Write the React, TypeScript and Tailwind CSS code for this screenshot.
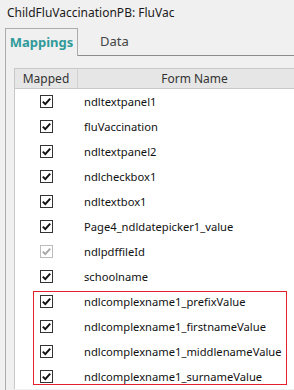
import React from 'react';

interface FieldRow {
  name: string;
  disabled?: boolean;
}

const fields: FieldRow[] = [
  { name: 'ndltextpanel1' },
  { name: 'fluVaccination' },
  { name: 'ndltextpanel2' },
  { name: 'ndlcheckbox1' },
  { name: 'ndltextbox1' },
  { name: 'Page4_ndldatepicker1_value' },
  { name: 'ndlpdffileId', disabled: true },
  { name: 'schoolname' },
];

const highlighted: FieldRow[] = [
  { name: 'ndlcomplexname1_prefixValue' },
  { name: 'ndlcomplexname1_firstnameValue' },
  { name: 'ndlcomplexname1_middlenameValue' },
  { name: 'ndlcomplexname1_surnameValue' },
];

const Check = ({ disabled }: { disabled?: boolean }) => (
  <div
    className={`w-[13px] h-[13px] border bg-white flex items-center justify-center ${
      disabled ? 'border-[#bcbcbc]' : 'border-[#333333]'
    }`}
  >
    <svg width="11" height="11" viewBox="0 0 11 11">
      <path
        d="M1.8 5.6 L4.3 8.1 L9.2 2.6"
        fill="none"
        stroke={disabled ? '#a8a8a8' : '#111111'}
        strokeWidth="2"
      />
    </svg>
  </div>
);

const Row = ({ row }: { row: FieldRow }) => (
  <div className="flex h-[25px] items-center">
    <div className="w-[63px] flex justify-center shrink-0">
      <Check disabled={row.disabled} />
    </div>
    <div className="pl-[6px] text-[11.2px] text-[#111111] whitespace-nowrap">{row.name}</div>
  </div>
);

export default function App() {
  return (
    <div className="w-[294px] h-[390px] overflow-hidden bg-[#f0f0f0] text-[12px] font-['Noto_Sans',sans-serif] leading-none">
      <div className="h-[28px] pl-[7px] pt-[7px] text-[#1a1a1a]">ChildFluVaccinationPB: FluVac</div>

      <div className="flex h-[28px] pl-[5px]">
        <div className="w-[73px] border border-b-0 border-[#acacac] flex items-center justify-center font-bold text-[13px] text-[#2f9a9a]">
          Mappings
        </div>
        <div className="flex-1 border-b border-[#8c8c8c] flex items-center pl-[22px] text-[13px] text-[#444444]">
          Data
        </div>
      </div>

      <div className="ml-[5px] border-l border-[#acacac] pl-[8px] pt-[12px] h-full">
        <div className="w-[300px] border-l border-t border-[#c8c8c8] bg-white">
          <div className="flex h-[20px] bg-[#e6e6e6] border-b border-[#c8c8c8] text-[#333333]">
            <div className="w-[63px] border-r border-[#d2d2d2] flex items-center justify-center">Mapped</div>
            <div className="w-[233px] flex items-center justify-center">Form Name</div>
          </div>
          {fields.map((row) => (
            <Row key={row.name} row={row} />
          ))}
          <div className="relative">
            {highlighted.map((row) => (
              <Row key={row.name} row={row} />
            ))}
            <div className="absolute left-[18px] top-[2px] w-[254px] h-[94px] border border-[#e3202b] pointer-events-none" />
          </div>
        </div>
      </div>
    </div>
  );
}
